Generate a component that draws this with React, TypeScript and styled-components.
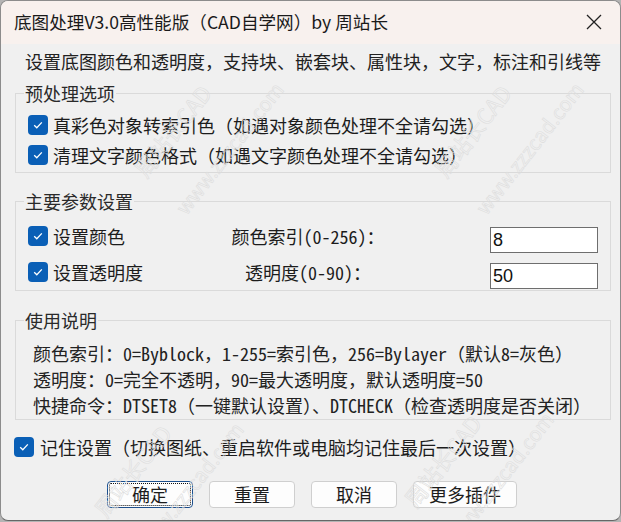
import React from "react";
import styled, { createGlobalStyle } from "styled-components";

const Global = createGlobalStyle`
  html, body { margin: 0; padding: 0; background: #b4b4b4; }
  body { width: 621px; height: 522px; overflow: hidden; }
  * { box-sizing: border-box; }
`;

const CJK = `"Noto Sans Mono CJK SC", "Noto Sans CJK SC", sans-serif`;

const Window = styled.div`
  position: relative;
  width: 621px;
  height: 521px;
  border: 1px solid #8c8c8c;
  border-bottom-color: #666;
  border-radius: 8px;
  background: #f0f0f0;
  overflow: hidden;
  display: flex;
  flex-direction: column;
  font-family: ${CJK};
  color: #1c1c1c;
`;

const TitleBar = styled.div`
  height: 43px;
  flex: none;
  background: #f8f1ee;
  display: flex;
  align-items: center;
  justify-content: space-between;
  padding: 0 18px 2px 13px;
  font-family: "Noto Sans CJK SC", sans-serif;
  font-size: 17.6px;
  color: #1a1a1a;
`;

const Close = styled.svg`
  width: 16px;
  height: 16px;
  stroke: #222;
  stroke-width: 1.3;
`;

const Desc = styled.div`
  margin: 5px 0 0 24px;
  font-size: 18px;
  line-height: 24px;
  white-space: nowrap;
  color: #222;
`;

const Group = styled.fieldset<{ $top: number }>`
  margin: ${(p) => p.$top}px 9px 0 14px;
  padding: 0;
  border: 1px solid #dadada;
  min-width: 0;
`;

const Legend = styled.legend`
  margin-left: 8px;
  padding: 0 1px;
  font-size: 18px;
  line-height: 22px;
  color: #2a2a2a;
`;

const CheckList = styled.div`
  padding: 6px 0 2px 12px;
  display: flex;
  flex-direction: column;
`;

const CheckRow = styled.label<{ $h?: number }>`
  display: flex;
  align-items: center;
  gap: 5px;
  height: ${(p) => p.$h ?? 30}px;
  font-size: 18px;
  color: #1c1c1c;
  white-space: nowrap;
`;

const Box = styled.span`
  width: 20px;
  height: 20px;
  flex: none;
  border-radius: 4px;
  background: #0a5fb6;
  display: flex;
  align-items: center;
  justify-content: center;
`;

const ParamGrid = styled.div`
  display: grid;
  grid-template-columns: 200px 160px 1fr;
  row-gap: 8px;
  padding: 13px 12px 1px 12px;
  align-items: start;
`;

const ParamLabel = styled.div`
  justify-self: center;
  font-size: 18px;
  line-height: 22px;
  white-space: nowrap;
  color: #1c1c1c;
`;

const Input = styled.input`
  justify-self: end;
  margin-top: 2px;
  width: 108px;
  height: 26px;
  border: 1px solid #6e6e6e;
  background: #fff;
  padding: 0 0 0 2px;
  font-family: "Liberation Sans", sans-serif;
  font-size: 18px;
  color: #111;
  outline: none;
`;

const Notes = styled.div`
  padding: 9px 0 1px 17px;
  font-size: 18px;
  line-height: 26px;
  color: #222;
  white-space: nowrap;
`;

const Remember = styled(CheckRow)`
  margin: 12px 0 0 13px;
  gap: 6px;
`;

const Buttons = styled.div`
  margin: 19px 0 0 106px;
  display: flex;
  gap: 16px;
`;

const Button = styled.button<{ $w: number; $default?: boolean }>`
  position: relative;
  width: ${(p) => p.$w}px;
  height: 27px;
  padding: 0;
  border-radius: 4px;
  background: #fdfdfd;
  border: 1px solid ${(p) => (p.$default ? "#1d4f8c" : "#cfcfcf")};
  font-family: ${CJK};
  font-size: 18px;
  line-height: 25px;
  color: #1c1c1c;
  ${(p) => (p.$default ? `outline: 1px dotted #111; outline-offset: -3px;` : ``)}
`;

const Mark = styled.span<{ $size: number }>`
  position: absolute;
  font-family: "Noto Sans CJK SC", "Liberation Sans", sans-serif;
  font-size: ${(p) => p.$size}px;
  white-space: nowrap;
  color: transparent;
  -webkit-text-stroke: 0.6px #dedede;
  transform: rotate(-52deg);
  transform-origin: left bottom;
  pointer-events: none;
`;

const Check = () => (
  <Box>
    <svg width="12" height="12" viewBox="0 0 12 12">
      <path d="M2.2 6.3 L4.8 8.8 L9.8 3.4" fill="none" stroke="#fff" strokeWidth="1.3" />
    </svg>
  </Box>
);

const marks = [
  { x: 150, y: 150 },
  { x: 450, y: 150 },
  { x: 110, y: 490 },
  { x: 420, y: 480 },
];

export default function App() {
  return (
    <>
      <Global />
      <Window>
        <TitleBar>
          <span>底图处理V3.0高性能版（CAD自学网）by 周站长</span>
          <Close viewBox="0 0 16 16">
            <path d="M1 1 L15 15 M15 1 L1 15" />
          </Close>
        </TitleBar>
        <Desc>设置底图颜色和透明度，支持块、嵌套块、属性块，文字，标注和引线等</Desc>

        <Group $top={9}>
          <Legend>预处理选项</Legend>
          <CheckList>
            <CheckRow>
              <Check />
              真彩色对象转索引色（如遇对象颜色处理不全请勾选）
            </CheckRow>
            <CheckRow>
              <Check />
              清理文字颜色格式（如遇文字颜色处理不全请勾选）
            </CheckRow>
          </CheckList>
        </Group>

        <Group $top={17}>
          <Legend>主要参数设置</Legend>
          <ParamGrid>
            <CheckRow $h={22}>
              <Check />
              设置颜色
            </CheckRow>
            <ParamLabel>颜色索引(0-256)：</ParamLabel>
            <Input defaultValue="8" />
            <CheckRow $h={22}>
              <Check />
              设置透明度
            </CheckRow>
            <ParamLabel>透明度(0-90)：</ParamLabel>
            <Input defaultValue="50" />
          </ParamGrid>
        </Group>

        <Group $top={18}>
          <Legend>使用说明</Legend>
          <Notes>
            <div>颜色索引：0=Byblock，1-255=索引色，256=Bylayer（默认8=灰色）</div>
            <div>透明度：0=完全不透明，90=最大透明度，默认透明度=50</div>
            <div>快捷命令：DTSET8（一键默认设置）、DTCHECK（检查透明度是否关闭）</div>
          </Notes>
        </Group>

        <Remember>
          <Check />
          记住设置（切换图纸、重启软件或电脑均记住最后一次设置）
        </Remember>

        <Buttons>
          <Button $w={86} $default>确定</Button>
          <Button $w={86}>重置</Button>
          <Button $w={86}>取消</Button>
          <Button $w={104}>更多插件</Button>
        </Buttons>

        {marks.map((m, i) => (
          <React.Fragment key={i}>
            <Mark $size={22} style={{ left: m.x, top: m.y }}>周站长CAD</Mark>
            <Mark $size={20} style={{ left: m.x + 40, top: m.y + 40 }}>www.zzzcad.com</Mark>
          </React.Fragment>
        ))}
      </Window>
    </>
  );
}
